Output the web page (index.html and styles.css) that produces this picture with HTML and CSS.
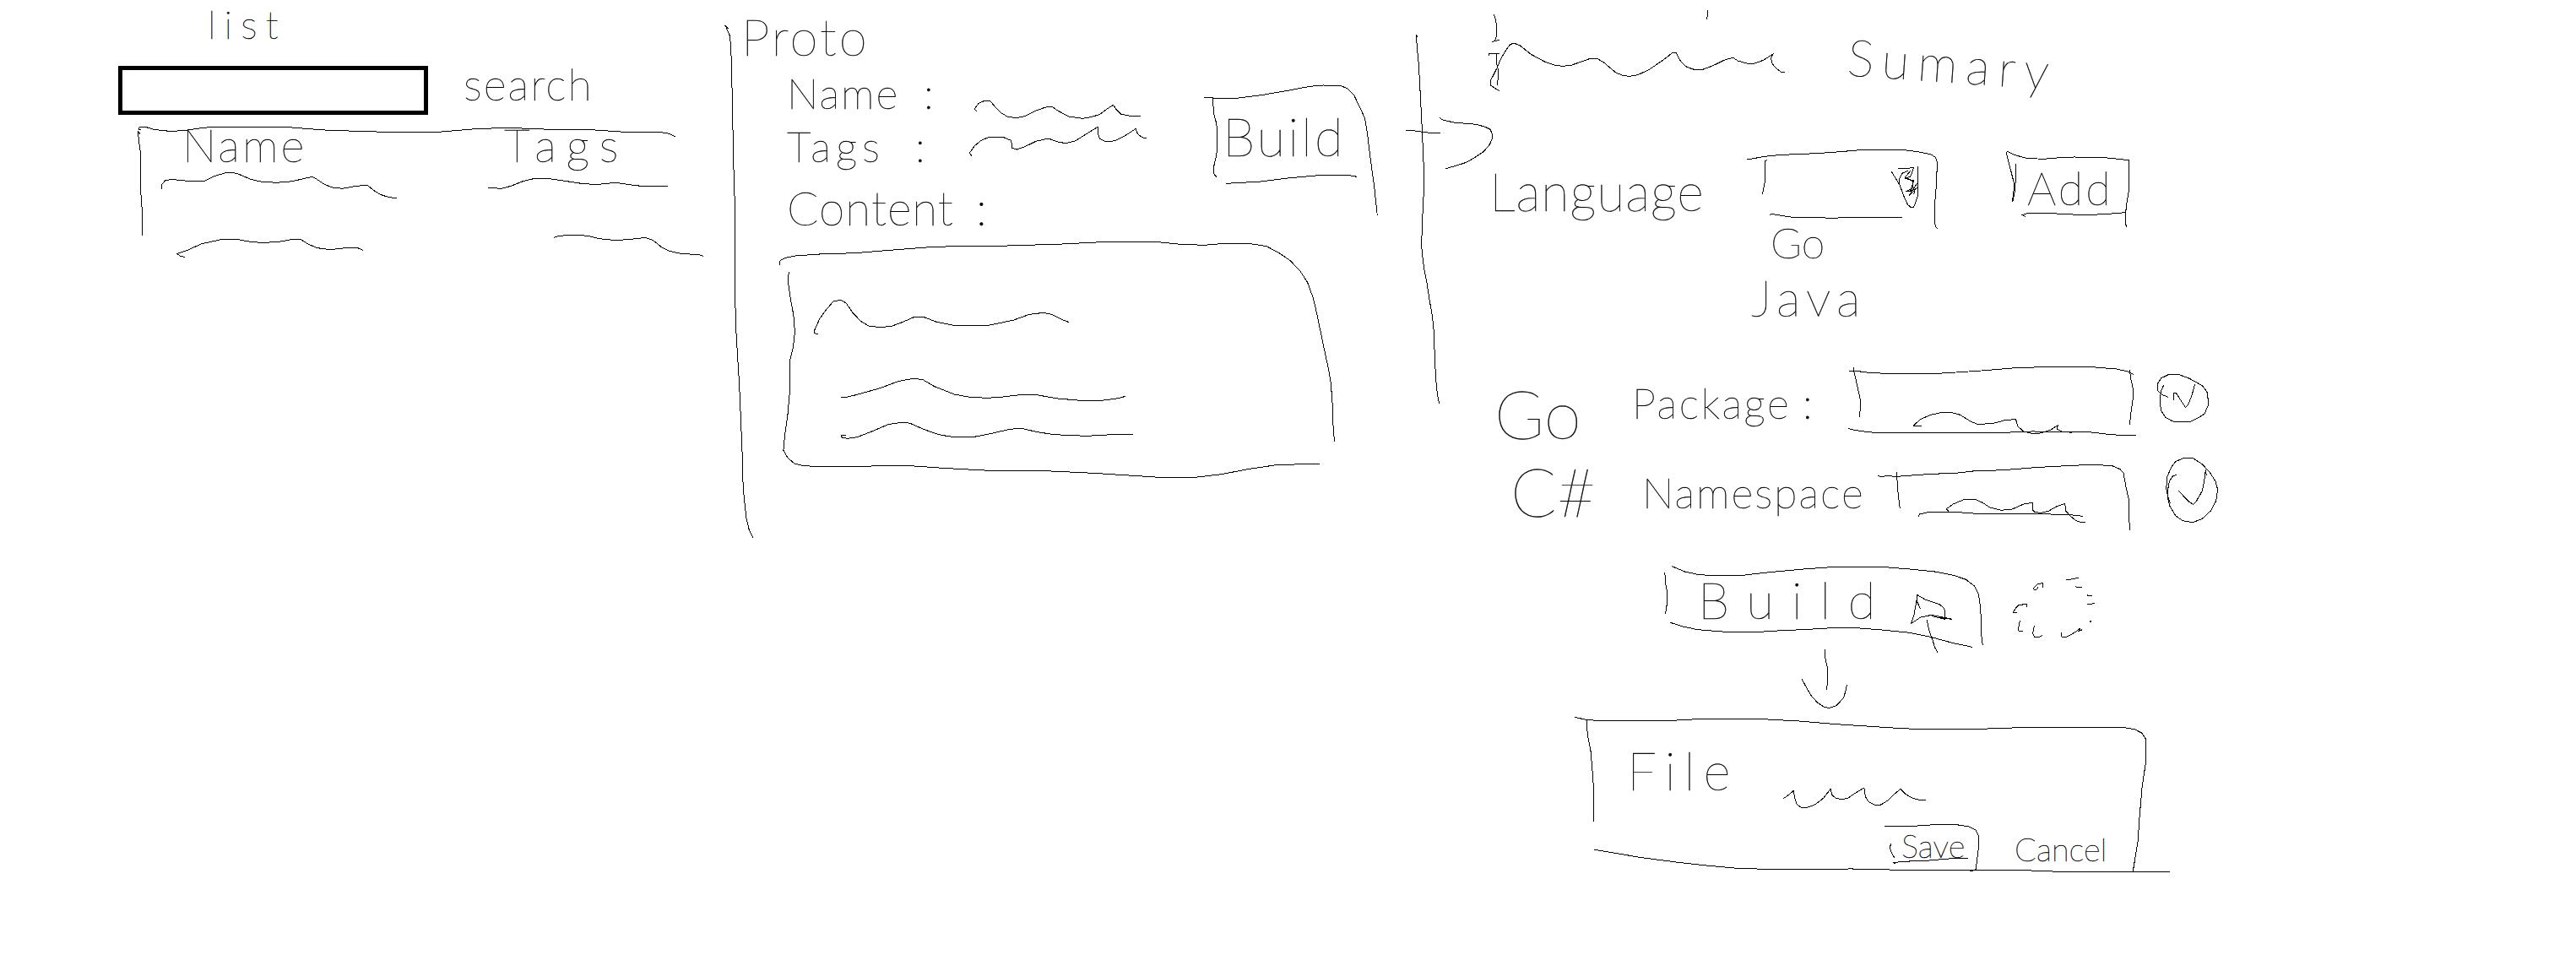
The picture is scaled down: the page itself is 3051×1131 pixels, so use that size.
FILE: index.html
```html
<!DOCTYPE html>
<html lang="en">
<head>
<meta charset="utf-8">
<title>Proto builder wireframe</title>
<link rel="stylesheet" href="styles.css">
</head>
<body>
<main class="board">

  <section class="panel panel-list">
    <svg class="ink" aria-hidden="true">
      <g transform="translate(120 0) scale(.47194 .33333)">
        <!-- table frame -->
        <path d="M99 461L93 459L96 452L113 452L130 459L152 464L176 466L206 464L240 457L272 452L330 451L400 451L470 452L505 456L560 462L640 466L740 470L830 471L880 465L940 458L1020 454L1090 458L1150 461L1230 461L1270 465L1335 471L1405 470L1425 475L1440 485"/>
        <path d="M98 478L92 466L94 500L98 540L99 680L102 740L103 838"/>
        <!-- table rows -->
        <path d="M151 673L152 655L160 642L176 637L200 641L240 645L260 642L285 625L310 615L330 613L345 619L375 637L400 645L440 649L480 644L510 634L530 628L542 638L560 655L580 666L605 670L640 661L668 658L682 675L700 691L722 701L742 704"/>
        <path d="M971 667L1005 670L1030 660L1060 643L1085 635L1115 633L1150 640L1200 651L1240 656L1290 649L1320 655L1360 662L1421 662"/>
        <path d="M209 913L197 909L190 901L215 890L250 867L300 851L340 850L370 858L405 863L450 858L480 850L500 850L520 868L542 881L575 887L620 880L645 882L656 889"/>
        <path d="M1135 844L1150 838L1185 834L1220 838L1250 848L1290 854L1330 850L1365 844L1385 854L1405 877L1425 892L1455 901L1500 905L1510 910"/>
      </g>
    </svg>
    <h1 class="word title-list">list</h1>
    <div class="search-row">
      <div class="search-box"></div>
      <span class="word search-label">search</span>
    </div>
    <div class="table-head">
      <span class="word head-name">Name</span>
      <span class="word head-tags">Tags</span>
    </div>
  </section>

  <section class="panel panel-proto">
    <svg class="ink" aria-hidden="true">
      <g transform="scale(.52296 .33333)">
        <!-- divider -->
        <path d="M35 90L45 103L38 96L46 125L49 160L51 260L53 420L56 640L58 720L58 960L59 1080L61 1180L64 1260L68 1360L71 1470L75 1620L76 1700L79 1770L84 1840L90 1880L99 1911"/>
        <!-- name and tags values -->
        <path d="M605 395L601 387L610 367L622 359L636 358L645 375L660 400L675 414L695 419L715 413L740 393L760 382L776 378L790 394L815 414L845 421L865 416L885 406L900 388L915 373L923 391L933 406L950 411L977 412"/>
        <path d="M594 554L590 543L600 520L615 500L632 488L665 487L684 499L686 526L697 531L715 521L740 502L768 492L790 504L807 509L830 500L850 480L880 451L880 475L885 494L900 504L920 500L945 479L966 457L970 475L980 488L990 491"/>
        <!-- build button -->
        <path d="M1120 347L1160 349L1200 348L1250 338L1310 322L1360 307L1390 303L1428 304L1444 313L1460 337L1470 370L1485 420L1491 480L1498 570L1506 660L1513 764"/>
        <path d="M1141 346L1142 400L1149 440L1151 500L1149 550L1143 590L1143 618L1149 628"/>
        <path d="M1171 652L1250 645L1310 633L1380 623L1450 623L1467 628"/>
        <!-- content box -->
        <path d="M160 941L160 927L172 916L195 909L250 903L330 899L400 890L500 878L570 874L680 873L800 867L890 860L1010 859L1060 867L1120 871L1160 866L1230 867L1262 875L1290 898L1315 925L1337 960L1355 1003L1368 1060L1377 1120L1390 1220L1401 1300L1407 1350L1411 1420L1413 1510L1416 1569"/>
        <path d="M180 966L179 1005L184 1060L191 1120L194 1180L190 1235L182 1285L183 1380L178 1470L171 1550L168 1600L178 1627L194 1648L215 1655L250 1658L370 1656L455 1655L530 1663L620 1671L760 1673L870 1681L960 1690L1020 1696L1100 1696L1160 1685L1220 1667L1280 1653L1340 1649L1382 1648"/>
        <!-- content lines -->
        <path d="M246 1187L239 1184L238 1175L250 1133L265 1100L281 1071L298 1066L310 1077L325 1111L343 1141L362 1159L390 1163L415 1158L440 1143L465 1126L487 1127L515 1144L560 1158L625 1158L660 1147L690 1137L725 1117L758 1111L775 1117L800 1136L815 1145"/>
        <path d="M299 1412L306 1413L330 1404L385 1380L430 1354L465 1344L485 1350L510 1373L555 1401L590 1411L630 1414L665 1410L710 1402L745 1404L790 1416L840 1423L895 1422L930 1414L942 1408"/>
        <path d="M309 1547L299 1548L301 1555L314 1558L335 1553L370 1532L405 1508L440 1500L455 1504L485 1525L520 1544L545 1551L600 1552L640 1540L680 1525L708 1522L740 1534L780 1544L855 1549L925 1543L959 1543"/>
      </g>
    </svg>
    <h1 class="word title-proto">Proto</h1>
    <div class="meta">
      <div class="fields">
        <div class="field field-name"><span class="word">Name</span><span class="word">:</span></div>
        <div class="field field-tags"><span class="word">Tags</span><span class="word">:</span></div>
        <div class="field field-content"><span class="word">Content</span><span class="word">:</span></div>
      </div>
      <span class="word build-small">Build</span>
    </div>
  </section>

  <section class="panel panel-summary">
    <svg class="ink" aria-hidden="true">
      <g transform="scale(.33333)">
        <!-- divider and arrow through it -->
        <path d="M118 131L112 125L116 180L121 230L127 340L132 440L136 530L139 600L139 680L134 780L131 870L133 900L140 955L150 1005L160 1070L169 1120L175 1180L178 1270L182 1350L187 1400L194 1433"/>
        <path d="M76 462L100 464L135 469L160 472L197 474"/>
        <path d="M197 418L203 425L245 435L325 442L358 451L375 460L382 475L382 493L372 515L350 540L315 563L290 577L250 590L217 599"/>
        <!-- edit mark and title underline -->
        <path d="M388 51L393 65L398 90L398 125L391 146M382 148L407 142M371 198L371 190L408 191M398 192L399 230L404 250L401 302"/>
        <path d="M407 323L378 304L377 285L400 240L412 210L430 180L445 159L458 153L480 161L520 193L570 220L605 232L635 235L665 231L700 219L730 208L755 208L780 223L820 257L845 268L870 271L900 266L940 247L990 213L1022 188L1035 187L1050 215L1070 236L1095 246L1130 247L1165 234L1210 212L1238 205L1255 216L1290 226L1315 225L1345 214L1379 193L1373 205L1376 224L1390 242L1408 255L1421 257"/>
        <path d="M1147 36L1147 57L1144 69"/>
        <!-- language select -->
        <path d="M1288 567L1350 556L1410 550L1490 547L1550 544L1620 539L1700 532L1840 532L1900 540L1940 548L1958 560L1963 575L1961 650L1955 720L1954 790L1959 808L1964 811"/>
        <path d="M1358 568L1353 572L1352 640L1342 690M1369 764L1373 760L1440 771L1520 772L1590 775L1650 772L1838 772"/>
        <path d="M1801 610L1830 657L1845 697L1858 727L1870 737L1880 736L1893 700L1895 650L1894 592M1825 600L1880 596L1868 628L1848 633L1880 642L1870 672L1852 680L1875 678L1892 650L1863 696L1893 666M1860 607L1840 615L1829 635L1828 657M1870 605L1850 629L1876 644L1878 665L1865 680L1885 672L1880 690"/>
        <!-- add button -->
        <path d="M2242 583L2242 640L2239 680L2231 718L2233 690L2238 658L2209 543L2213 538L2240 551L2280 562L2340 565L2400 560L2450 558L2550 559L2645 569L2644 680L2637 720L2633 755L2633 798L2637 805"/>
        <path d="M2276 769L2266 764L2280 759L2370 758L2480 764L2560 761L2630 755"/>
      </g>
      <g transform="translate(520 410) scale(.33333)">
        <!-- package field -->
        <path d="M91 88L108 87L160 94L260 99L370 99L470 93L560 87L670 78L800 73L940 73L1040 81L1085 91L1100 101M107 76L108 92L119 140L129 185L131 215L126 253"/>
        <path d="M1087 84L1092 120L1099 150L1099 185L1092 235L1087 280M88 293L110 298L165 306L300 307L640 307L740 303L935 304L1010 313L1080 318L1110 318"/>
        <path d="M348 283L319 282L345 259L380 244L425 234L455 236L485 244L520 266L545 277L600 275L640 264L682 259L690 285L710 303L740 310L770 309L805 298L832 281L828 293L845 303L881 307"/>
        <!-- package valid -->
        <path d="M1223 181L1198 170L1187 157L1187 132L1200 113L1225 101L1260 100L1300 115L1345 140L1362 163L1368 205L1353 240L1333 253L1302 268L1240 267L1215 253L1199 230L1195 200L1198 160L1208 138M1243 191L1243 165L1253 168L1285 217L1294 210L1308 175L1319 134"/>
        <!-- namespace field -->
        <path d="M193 461L205 463L225 461L260 463L380 454L470 451L530 444L640 440L750 431L880 424L960 421L1025 425L1053 437L1065 450L1074 500L1083 540L1085 600L1087 654M259 448L264 520L268 555L271 577"/>
        <path d="M338 605L340 597L375 589L480 590L545 595L740 595L875 599L920 604"/>
        <path d="M444 587L436 578L460 561L495 546L540 545L565 556L590 573L630 583L670 579L710 561L742 556L742 582L750 590L772 592L800 585L830 568L857 559L860 585L875 602L895 619L915 626L930 626"/>
        <!-- namespace valid -->
        <path d="M1253 457L1240 462L1228 480L1221 520L1223 540L1231 557L1222 530L1217 505L1221 463L1235 430L1250 410L1280 397L1312 398L1345 419L1373 450L1392 480L1400 510L1394 550L1375 585L1345 613L1312 626L1275 620L1250 602L1230 568L1221 535M1261 514L1295 550L1313 563L1325 549L1345 514L1352 480L1357 438L1360 458"/>
      </g>
      <g transform="translate(300 650) scale(.36996 .33333)">
        <!-- build button with pointer -->
        <path d="M107 61L150 81L195 92L250 95L335 94L380 88L450 80L530 72L620 65L790 65L870 72L950 81L1010 94L1050 109L1077 132L1090 160L1097 210L1099 300L1103 338L1107 343"/>
        <path d="M86 84L88 122L93 150L93 195L88 230M104 262L140 275L190 287L280 295L390 295L460 290L530 287L620 281L700 281L780 288L870 298L940 314L1010 335L1070 349"/>
        <path d="M904 212L892 184L893 163L920 180L965 197L981 212L983 250L940 238L960 244L1006 250L940 235L905 243L875 265L884 233L892 184M925 252L932 290L945 330L950 350L960 368"/>
        <!-- busy indicator -->
        <path d="M1266 139L1281 124L1296 122L1297 137M1266 139L1269 146L1278 143L1281 136M1371 111L1411 103M1401 132L1404 136L1421 136M1439 163L1441 167L1455 166M1439 196L1451 196L1463 193M1201 226L1213 225M1201 226L1209 211L1219 199L1244 197L1245 206M1223 256L1217 285L1220 292L1232 292M1269 273L1264 300L1269 313L1284 313L1294 308M1355 297L1357 312L1372 313L1400 296L1417 281L1411 292L1423 287M1446 262L1449 256L1451 262"/>
        <!-- arrow to the dialog -->
        <path d="M598 358L600 390L606 420L607 470L604 500M525 463L540 494L555 522L575 547L598 563L613 565L635 557L658 530L665 505L669 483"/>
      </g>
      <g transform="translate(200 830) scale(.48469 .33333)">
        <!-- file dialog -->
        <path d="M51 58L80 67L120 72L265 72L350 65L510 65L600 72L690 83L850 98L920 102L1015 102L1090 97L1180 94L1390 94L1420 101L1438 115L1447 135L1447 220L1438 310L1431 430L1428 500L1420 570L1416 605"/>
        <path d="M81 70L83 120L91 180L95 250L98 310L99 428M100 529L150 541L215 557L300 573L380 586L450 595L520 598L730 597L850 601L1150 602L1270 609L1410 609L1430 607L1506 607"/>
        <path d="M560 349L572 337L587 319L589 345L595 368L605 379L620 379L640 368L660 345L677 313L681 335L690 346L705 350L720 345L735 330L759 309L762 340L770 359L785 370L800 369L817 354L830 335L848 313L860 331L875 344L890 351L910 352"/>
        <!-- save button -->
        <path d="M809 447L880 445L940 439L985 440L1015 447L1032 459L1039 480L1038 530L1032 598L1025 604L1017 603M824 508L822 525L828 545L834 560M836 580L832 575L850 571L910 568L965 561L1012 559"/>
      </g>
    </svg>
    <h1 class="word title-summary">Sumary</h1>
    <div class="language-row">
      <span class="word language">Language</span>
      <span class="word add">Add</span>
    </div>
    <div class="options">
      <span class="word option-go">Go</span>
      <span class="word option-java">Java</span>
    </div>
    <div class="setting setting-go">
      <span class="word lang">Go</span>
      <span class="word key">Package</span>
      <span class="word key">:</span>
    </div>
    <div class="setting setting-csharp">
      <span class="word lang">C#</span>
      <span class="word key">Namespace</span>
    </div>
    <div class="word build-large">Build</div>
    <div class="word file">File</div>
    <div class="actions">
      <span class="word save">Save</span>
      <span class="word cancel">Cancel</span>
    </div>
  </section>

</main>
</body>
</html>
```
FILE: styles.css
```css
* { box-sizing: border-box; }

body {
  margin: 0;
  background: #fff;
  color: #000;
  font-family: Lato, "Liberation Sans", sans-serif;
  font-weight: 100;
}

.board {
  display: grid;
  grid-template-columns: 840px 800px 1411px;
  height: 1131px;
  overflow: hidden;
}

.panel { position: relative; }

/* pen strokes lie over the whole panel */
.ink {
  position: absolute;
  inset: 0;
  width: 100%;
  height: 100%;
  overflow: visible;
  pointer-events: none;
}

.ink path {
  fill: none;
  stroke: #000;
  stroke-width: 1;
  vector-effect: non-scaling-stroke;
  shape-rendering: crispEdges;
}

.word {
  display: block;
  margin: 0;
  font-weight: 100;
  white-space: nowrap;
  -webkit-text-stroke: .4px #000;
}

/* list */
.title-list { padding-left: 246px; font-size: 46px; line-height: 58px; letter-spacing: 10px; }
.search-row { display: flex; gap: 42px; height: 58px; margin: 20px 0 0 140px; }
.search-box { width: 367px; height: 58px; border: 5px solid #000; }
.search-label { font-size: 52px; line-height: 43px; letter-spacing: 2px; }
.table-head {
  display: grid;
  grid-template-columns: 381px auto;
  padding-left: 216px;
  font-size: 54px;
  line-height: 72px;
}
.head-name { letter-spacing: 3px; }
.head-tags { letter-spacing: 12px; }

/* proto */
.title-proto { padding-left: 38px; font-size: 60px; line-height: 87px; letter-spacing: 3px; }
.meta { display: flex; align-items: flex-start; }
.fields { width: 608px; padding-left: 92px; }
.field { display: grid; grid-template-columns: 162px auto; font-size: 50px; }
.field-name { height: 39px; line-height: 47px; letter-spacing: 2px; }
.field-tags { grid-template-columns: 152px auto; line-height: 94px; letter-spacing: 6px; }
.field-content { grid-template-columns: 224px auto; font-size: 55px; line-height: 52px; letter-spacing: 1px; }
.build-small { font-size: 62px; line-height: 148px; letter-spacing: 3px; }

/* summary */
.title-summary {
  width: 250px;
  margin-left: 548px;
  font-size: 60px;
  line-height: 150px;
  letter-spacing: 10px;
  transform: rotate(4deg);
}
.language-row { display: flex; height: 110px; padding-left: 124px; }
.language { width: 637px; font-size: 61px; line-height: 154px; letter-spacing: 1px; }
.add { font-size: 54px; line-height: 146px; letter-spacing: 3px; }
.option-go { padding-left: 457px; font-size: 50px; line-height: 55px; }
.option-java { padding-left: 434px; font-size: 60px; line-height: 74px; letter-spacing: 7px; }
.setting { display: grid; height: 100px; }
.setting-go { grid-template-columns: 163px 202px auto; margin-top: 41px; padding-left: 130px; }
.setting-csharp { grid-template-columns: 156px auto; padding-left: 149px; }
.lang { font-size: 80px; line-height: 118px; }
.setting-csharp .lang { line-height: 102px; }
.key { font-size: 50px; line-height: 95px; letter-spacing: 2.5px; }
.setting-csharp .key { line-height: 107px; letter-spacing: 2px; }
.build-large { padding-left: 371px; font-size: 60px; line-height: 160px; letter-spacing: 21px; }
.file { margin-top: 80px; padding-left: 287px; font-size: 62px; line-height: 84px; letter-spacing: 10px; }
.actions { display: flex; padding-left: 612px; font-size: 38px; }
.save { width: 134px; line-height: 95px; }
.cancel { line-height: 103px; }
```
